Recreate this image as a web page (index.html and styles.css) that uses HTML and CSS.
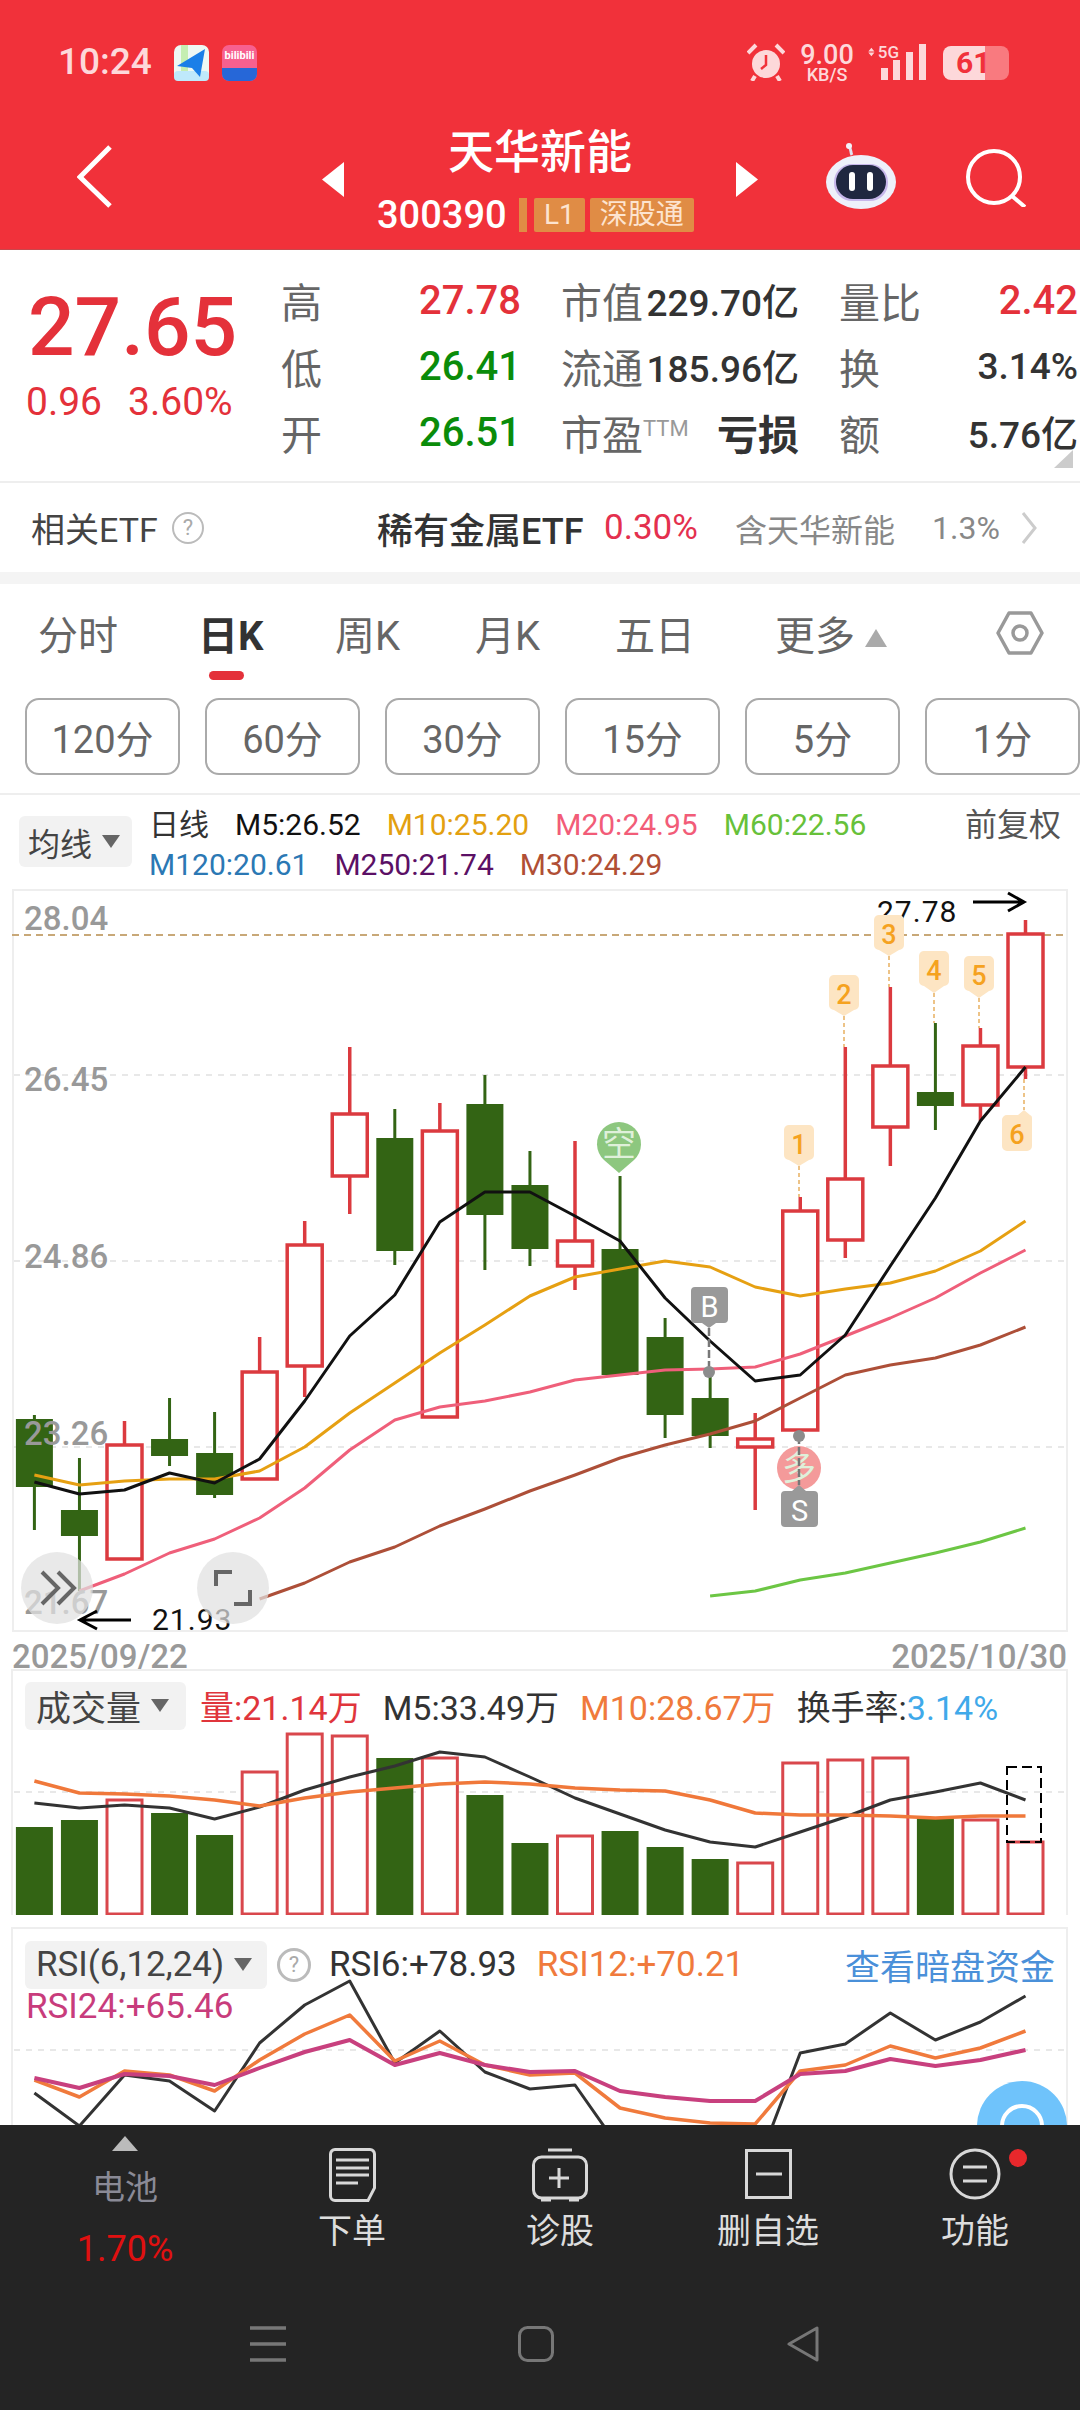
FILE: index.html
```html
<!DOCTYPE html>
<html lang="zh">

<head>
    <meta charset="utf-8">
    <meta name="viewport" content="width=device-width, initial-scale=1.0">
    <title>天华新能 300390</title>
    <link rel="stylesheet" href="styles.css">
</head>

<body>
    <header class="top">
        <div class="status">
            <span class="status-time">10:24</span>
            <svg class="app-icon" viewBox="0 0 35 36">
                <rect width="35" height="36" rx="7" fill="#eef8f4" />
                <rect x="7" width="7" height="36" fill="#c5eeb2" />
                <rect y="26" width="35" height="10" rx="4" fill="#bfe9fb" />
                <path d="M3 21L31 4L26 32L18 23Z" fill="#1a7fe8" />
            </svg>
            <div class="app-bili">
                <span>bilibili</span>
                <i></i>
            </div>
            <div class="status-right">
                <svg class="status-alarm" viewBox="0 0 38 38">
                    <circle cx="19" cy="21" r="14" fill="#fdd8da" />
                    <path d="M19 12V22L14 26" fill="none" stroke="#f1313a" stroke-width="2.5" />
                    <path d="M1 10L9 2M37 10L29 2M8 33L5 38M30 33L33 38" stroke="#fdd8da" stroke-width="4" />
                </svg>
                <div class="status-speed">
                    <b>9.00</b>
                    <span>KB/S</span>
                </div>
                <div class="status-net">
                    <svg width="11" height="14" viewBox="0 0 11 14">
                        <path d="M5.5 0L10.5 6H0.5ZM5.5 14L0.5 8H10.5Z" fill="#fdd8da" />
                    </svg>
                    <span>5G</span>
                </div>
                <svg class="status-signal" width="45" height="36" viewBox="0 0 45 36">
                    <rect y="24" width="7" height="12" fill="#fdd8da" />
                    <rect x="12" y="16" width="7" height="20" fill="#fdd8da" />
                    <rect x="25" y="8" width="7" height="28" fill="#fdd8da" />
                    <rect x="38" width="7" height="36" fill="#fdd8da" />
                </svg>
                <div class="status-battery"><span>61</span></div>
            </div>
        </div>

        <div class="nav">
            <svg class="nav-back" width="35" height="63" viewBox="0 0 35 63">
                <path d="M33 2L3 32L33 61" fill="none" stroke="#fff" stroke-width="5" />
            </svg>
            <svg class="nav-arrow prev" width="22" height="35" viewBox="0 0 22 35">
                <path d="M22 0V35L0 17.5Z" fill="#fff" />
            </svg>
            <div class="nav-center">
                <h1>天华新能</h1>
                <div class="nav-code">
                    <span class="code">300390</span>
                    <i class="tag-bar"></i>
                    <span class="tag">L1</span>
                    <span class="tag">深股通</span>
                </div>
            </div>
            <svg class="nav-arrow" width="22" height="35" viewBox="0 0 22 35">
                <path d="M0 0V35L22 17.5Z" fill="#fff" />
            </svg>
            <svg class="nav-robot" width="72" height="66" viewBox="0 0 72 66">
                <path d="M27 12C25 9 27 7 24 4" fill="none" stroke="#dfe3f3" stroke-width="3" />
                <circle cx="24" cy="3" r="3" fill="#f2f3fb" />
                <ellipse cx="36" cy="39" rx="35" ry="27" fill="#eef0fa" />
                <rect x="9" y="21" width="54" height="37" rx="18" fill="#c6b6ea" />
                <rect x="11" y="22" width="50" height="34" rx="17" fill="#1f2740" />
                <rect x="24" y="29" width="6" height="19" rx="3" fill="#fff" />
                <rect x="42" y="29" width="6" height="19" rx="3" fill="#fff" />
            </svg>
            <svg class="nav-search" width="60" height="58" viewBox="0 0 60 58">
                <circle cx="28" cy="28" r="26" fill="none" stroke="#fff" stroke-width="4" />
                <path d="M46 47L59 58" stroke="#fff" stroke-width="4" />
            </svg>
        </div>
    </header>

    <section class="quote">
        <div class="price">
            <div class="price-now">27.65</div>
            <div class="price-change"><span>0.96</span><span>3.60%</span></div>
        </div>
        <div class="stats">
            <div class="stat"><span class="stat-label">高</span><span class="red">27.78</span></div>
            <div class="stat"><span class="stat-label">市值</span><span class="dark">229.70亿</span></div>
            <div class="stat"><span class="stat-label">量比</span><span class="red">2.42</span></div>
            <div class="stat"><span class="stat-label">低</span><span class="green">26.41</span></div>
            <div class="stat"><span class="stat-label">流通</span><span class="dark">185.96亿</span></div>
            <div class="stat"><span class="stat-label">换</span><span class="dark">3.14%</span></div>
            <div class="stat"><span class="stat-label">开</span><span class="green">26.51</span></div>
            <div class="stat"><span class="stat-label">市盈<sup>TTM</sup></span><span class="dark loss">亏损</span></div>
            <div class="stat"><span class="stat-label">额</span><span class="dark">5.76亿</span></div>
        </div>
        <i class="quote-corner"></i>
    </section>

    <section class="etf">
        <span class="etf-title">相关ETF</span>
        <i class="help etf-help">?</i>
        <span class="etf-name">稀有金属ETF</span>
        <span class="etf-rate">0.30%</span>
        <span class="etf-hold">含天华新能</span>
        <span class="etf-hold etf-pct">1.3%</span>
        <svg class="etf-more" width="16" height="32" viewBox="0 0 16 32">
            <path d="M2 1L14 16L2 31" fill="none" stroke="#ccc" stroke-width="3" />
        </svg>
    </section>

    <div class="band"></div>

    <nav class="tabs">
        <button class="tab">分时</button>
        <button class="tab active">日K</button>
        <button class="tab">周K</button>
        <button class="tab">月K</button>
        <button class="tab">五日</button>
        <button class="tab">更多<i class="tab-up"></i></button>
        <svg class="tab-hex" width="48" height="46" viewBox="0 0 48 46">
            <path d="M2 23L13 3H35L46 23L35 43H13Z" fill="none" stroke="#999" stroke-width="3.5" stroke-linejoin="round" />
            <circle cx="24" cy="23" r="7" fill="none" stroke="#999" stroke-width="3.5" />
        </svg>
    </nav>

    <div class="periods">
        <button>120分</button>
        <button>60分</button>
        <button>30分</button>
        <button>15分</button>
        <button>5分</button>
        <button>1分</button>
    </div>

    <section class="legend">
        <div class="chip chip-ma">均线<i class="chip-down"></i></div>
        <div class="legend-text">
            <div class="legend-row">
                <span class="c-text">日线</span>
                <span class="c-black">M5:26.52</span>
                <span class="c-ma10">M10:25.20</span>
                <span class="c-ma20">M20:24.95</span>
                <span class="c-ma60">M60:22.56</span>
                <span class="legend-adjust">前复权</span>
            </div>
            <div class="legend-row">
                <span class="c-ma120">M120:20.61</span>
                <span class="c-ma250">M250:21.74</span>
                <span class="c-ma30">M30:24.29</span>
            </div>
        </div>
    </section>

    <!-- viewBox origins follow the page, so chart y values read as screen rows -->
    <svg class="kline" width="1080" height="743" viewBox="0 891 1080 743">
        <rect x="13" y="892" width="1054" height="741" fill="#fff" stroke="#eee" stroke-width="2" />
        <line class="grid-top" x1="12" y1="937" x2="1067" y2="937" />
        <line class="grid" x1="14" y1="1077" x2="1066" y2="1077" />
        <line class="grid" x1="14" y1="1263" x2="1066" y2="1263" />
        <line class="grid" x1="14" y1="1449" x2="1066" y2="1449" />

        <g id="kline-candles"></g>
        <g id="kline-lines"></g>

        <text class="axis" x="24" y="932">28.04</text>
        <text class="axis" x="24" y="1093">26.45</text>
        <text class="axis" x="24" y="1270">24.86</text>
        <text class="axis" x="24" y="1447">23.26</text>
        <text class="axis" x="24" y="1616">21.67</text>

        <text class="extreme" x="877" y="924">27.78</text>
        <path class="arrow" d="M973 904H1024M1008 895L1024 904L1008 913" />
        <text class="extreme" x="152" y="1632">21.93</text>
        <path class="arrow" d="M131 1622H80M97 1613L80 1622L97 1631" />

        <!-- numbered signals -->
        <g class="signal">
            <path class="signal-tie" d="M799 1168V1199M844 1018V1049M889 958V989M934 995V1025M979 1000V1030M1024 1081V1112" />
            <path d="M790 1127H809A5 5 0 0 1 814 1132V1157A5 5 0 0 1 809 1162L799 1168L789 1162A5 5 0 0 1 784 1157V1132A5 5 0 0 1 790 1127Z" />
            <text x="799" y="1156">1</text>
            <path d="M835 977H854A5 5 0 0 1 859 982V1007A5 5 0 0 1 854 1012L844 1018L834 1012A5 5 0 0 1 829 1007V982A5 5 0 0 1 835 977Z" />
            <text x="844" y="1006">2</text>
            <path d="M880 917H899A5 5 0 0 1 904 922V947A5 5 0 0 1 899 952L889 958L879 952A5 5 0 0 1 874 947V922A5 5 0 0 1 880 917Z" />
            <text x="889" y="946">3</text>
            <path d="M925 953H944A5 5 0 0 1 949 958V983A5 5 0 0 1 944 988L934 995L924 988A5 5 0 0 1 919 983V958A5 5 0 0 1 925 953Z" />
            <text x="934" y="982">4</text>
            <path d="M970 958H989A5 5 0 0 1 994 963V988A5 5 0 0 1 989 993L979 1000L969 993A5 5 0 0 1 964 988V963A5 5 0 0 1 970 958Z" />
            <text x="979" y="987">5</text>
            <path d="M1007 1117H1018L1024 1112L1030 1117A3 3 0 0 1 1032 1120V1148A5 5 0 0 1 1027 1153H1007A5 5 0 0 1 1002 1148V1122A5 5 0 0 1 1007 1117Z" />
            <text x="1017" y="1146">6</text>
        </g>

        <!-- empty / long pins -->
        <path class="pin-empty" d="M619 1175L604 1162A22 22 0 1 1 634 1162Z" />
        <text class="pin-text" x="619" y="1158">空</text>

        <path class="trade-tie" d="M709 1330V1373" />
        <circle class="trade-dot" cx="709" cy="1374" r="6" />
        <path class="trade-box" d="M695 1289H724A4 4 0 0 1 728 1293V1321A4 4 0 0 1 724 1325H716L709 1330L702 1325H695A4 4 0 0 1 691 1321V1293A4 4 0 0 1 695 1289Z" />
        <text class="trade-text" x="709.5" y="1319">B</text>

        <circle class="pin-long" cx="799" cy="1470" r="22" />
        <text class="pin-text" x="799" y="1482">多</text>
        <path class="trade-tie" d="M799 1438V1487" />
        <circle class="trade-dot" cx="799" cy="1438" r="6" />
        <path class="trade-box" d="M785 1493H792L799 1487L806 1493H814A4 4 0 0 1 818 1497V1525A4 4 0 0 1 814 1529H785A4 4 0 0 1 781 1525V1497A4 4 0 0 1 785 1493Z" />
        <text class="trade-text" x="799.5" y="1523">S</text>

        <!-- floating chart buttons -->
        <circle class="float-btn" cx="57" cy="1590" r="36" />
        <path class="float-icon" d="M42 1574L58 1590L42 1606M58 1574L74 1590L58 1606" />
        <circle class="float-btn" cx="233" cy="1590" r="36" />
        <path class="float-icon" d="M216 1588V1574H232M250 1592V1606H234" />
    </svg>

    <div class="dates"><span>2025/09/22</span><span>2025/10/30</span></div>

    <section class="pane pane-volume">
        <svg width="1080" height="246" viewBox="0 1671 1080 246">
            <path class="pane-frame" d="M12 1917V1672H1067V1917" />
            <line class="grid" x1="14" y1="1794" x2="1066" y2="1794" />
            <g id="volume-bars"></g>
            <rect class="volume-mark" x="1007" y="1769" width="34" height="75" />
            <g id="volume-lines"></g>
        </svg>
        <div class="pane-legend">
            <div class="pane-row volume-row">
                <div class="chip chip-vol">成交量<i class="chip-down"></i></div>
                <span class="c-red">量:21.14万</span>
                <span class="c-dark">M5:33.49万</span>
                <span class="c-orange">M10:28.67万</span>
                <span class="c-dark">换手率:<span class="c-blue">3.14%</span></span>
            </div>
        </div>
    </section>

    <section class="pane pane-rsi">
        <svg width="1080" height="198" viewBox="0 1929 1080 198">
            <path class="pane-frame" d="M12 2127V1930H1067V2127" />
            <line class="grid" x1="14" y1="2052" x2="1066" y2="2052" />
            <g id="rsi-lines"></g>
            <circle class="fab" cx="1022" cy="2128" r="45" />
            <circle class="fab-ring" cx="1022" cy="2128" r="20" />
        </svg>
        <div class="pane-legend">
            <div class="pane-row rsi-row">
                <div class="chip chip-rsi">RSI(6,12,24)<i class="chip-down"></i></div>
                <i class="help rsi-help">?</i>
                <span class="c-dark">RSI6:+78.93</span>
                <span class="c-orange">RSI12:+70.21</span>
                <span class="rsi-link">查看暗盘资金</span>
            </div>
            <div class="rsi-second">RSI24:+65.46</div>
        </div>
    </section>

    <footer class="bottom">
        <div class="actions">
            <div class="action action-battery">
                <i class="battery-up"></i>
                <span class="battery-name">电池</span>
                <span class="battery-rate">1.70%</span>
            </div>
            <div class="action">
                <svg width="47" height="54" viewBox="0 0 47 54">
                    <path class="action-line" d="M6 1.5H41A4.5 4.5 0 0 1 45.5 6V40L39 52.5H6A4.5 4.5 0 0 1 1.5 48V6A4.5 4.5 0 0 1 6 1.5Z" />
                    <path class="action-line" d="M7 12H40M7 20H40M7 27H40M7 35H29" />
                </svg>
                <span>下单</span>
            </div>
            <div class="action">
                <svg width="56" height="54" viewBox="0 0 56 54">
                    <path class="action-line" d="M16 2H40" />
                    <rect class="action-line" x="1.5" y="9" width="53" height="41" rx="8" />
                    <path class="action-line" d="M27 20V40M17 30H37" />
                    <path class="action-line" d="M9 52H19M37 52H47" />
                </svg>
                <span>诊股</span>
            </div>
            <div class="action">
                <svg width="47" height="54" viewBox="0 0 47 54">
                    <rect class="action-line" x="1.5" y="2.5" width="44" height="47" />
                    <path class="action-line" d="M11 26H37" />
                </svg>
                <span>删自选</span>
            </div>
            <div class="action">
                <svg width="52" height="54" viewBox="0 0 52 54">
                    <circle class="action-line" cx="26" cy="26" r="24" />
                    <path class="action-line" d="M14 19H38M14 33H38" />
                </svg>
                <span>功能</span>
                <i class="action-dot"></i>
            </div>
        </div>
        <div class="gestures">
            <svg width="36" height="36" viewBox="0 0 36 36">
                <path d="M0 2H36M0 18H36M0 34H36" stroke="#777" stroke-width="3.5" />
            </svg>
            <svg width="36" height="36" viewBox="0 0 36 36">
                <rect x="1.5" y="1.5" width="33" height="33" rx="8" fill="none" stroke="#777" stroke-width="3" />
            </svg>
            <svg width="34" height="36" viewBox="0 0 34 36">
                <path d="M31 2V34L3 18Z" fill="none" stroke="#777" stroke-width="3" stroke-linejoin="round" />
            </svg>
        </div>
    </footer>

    <script src="chart.js"></script>
</body>

</html>
```

FILE: styles.css
```css
* {
    box-sizing: border-box;
}

body,
h1 {
    margin: 0;
    padding: 0;
}

body {
    width: 1080px;
    height: 2412px;
    overflow: hidden;
    background-color: #fff;
    font-family: Roboto, "Noto Sans CJK SC", sans-serif;
    color: #333;
}

i {
    font-style: normal;
}

button {
    font-family: inherit;
    background: none;
    border: 0;
    padding: 0;
}

/* top red area */
.top {
    height: 250px;
    background-color: #f1313a;
    border-bottom: 1px solid #c9474c;
}

.status {
    display: flex;
    align-items: flex-start;
    height: 120px;
    padding: 43px 71px 0 58px;
    color: #fdd8da;
}

.status-time {
    width: 116px;
    font-size: 37px;
    line-height: 38px;
    font-weight: 500;
}

.app-icon {
    width: 35px;
    height: 36px;
    margin: 2px 13px 0 0;
}

.app-bili {
    width: 35px;
    height: 36px;
    margin-top: 2px;
    border-radius: 7px;
    background-color: #f7608f;
    overflow: hidden;
    color: #fff;
    font-size: 11px;
    line-height: 22px;
    text-align: center;
}

.app-bili span {
    display: block;
    height: 23px;
    font-weight: 700;
}

.app-bili i {
    display: block;
    height: 13px;
    background-color: #2667d8;
}

.status-right {
    display: flex;
    align-items: flex-start;
    margin-left: auto;
}

.status-alarm {
    width: 38px;
    height: 38px;
    margin-right: 12px;
}

.status-speed {
    width: 60px;
    text-align: center;
    font-size: 18px;
    line-height: 18px;
}

.status-speed b {
    display: block;
    font-size: 27px;
    line-height: 24px;
    font-weight: 500;
}

.status-speed span {
    display: block;
    font-weight: 500;
    margin-top: -1px;
}

.status-net {
    display: flex;
    align-items: center;
    width: 31px;
    margin: 2px 0 0 11px;
    gap: 3px;
    font-size: 17px;
    line-height: 14px;
    font-weight: 500;
}

.status-signal {
    margin: 1px 0 0 -18px;
}

.status-battery {
    width: 66px;
    height: 34px;
    margin: 3px 0 0 17px;
    border-radius: 8px;
    background: linear-gradient(90deg, #fdd8da 64%, #f97a7f 64%);
    color: #f1313a;
    font-size: 30px;
    line-height: 34px;
    font-weight: 700;
    padding-left: 13px;
}

.nav {
    display: flex;
    align-items: flex-start;
    height: 129px;
}

.nav-back {
    margin: 25px 0 0 77px;
}

.nav-arrow {
    margin-top: 42px;
}

.nav-arrow.prev {
    margin-left: 210px;
}

.nav-center {
    width: 392px;
    color: #fff;
}

.nav-center h1 {
    margin-top: 6px;
    font-size: 46px;
    line-height: 52px;
    font-weight: 500;
    text-align: center;
}

.nav-code {
    display: flex;
    align-items: center;
    height: 34px;
    margin-top: 20px;
    padding-left: 33px;
}

.code {
    width: 142px;
    font-size: 38px;
    font-weight: 500;
}

.tag-bar {
    width: 8px;
    height: 34px;
    background-color: #e08c45;
    margin-right: 7px;
}

.tag {
    height: 34px;
    margin-right: 5px;
    padding: 0 10px;
    background-color: #e08c45;
    border-radius: 2px;
    color: #fde4d0;
    font-size: 28px;
    line-height: 34px;
}

.nav-robot {
    margin: 23px 0 0 67px;
}

.nav-search {
    margin: 29px 0 0 69px;
}

/* quote block */
.quote {
    position: relative;
    display: flex;
    height: 233px;
    border-bottom: 2px solid #eee;
}

.price {
    width: 281px;
    padding-left: 26px;
    color: #e4313a;
}

.price-now {
    margin: 39px 0 0 2px;
    font-size: 82px;
    line-height: 76px;
    font-weight: 500;
}

.price-change {
    display: flex;
    gap: 26px;
    margin-top: 14px;
    font-size: 39px;
    line-height: 46px;
}

.stats {
    display: grid;
    grid-template-columns: 240px 238px 239px;
    grid-auto-rows: 66px;
    column-gap: 40px;
    padding-top: 17px;
}

.stat {
    display: flex;
    justify-content: space-between;
    align-items: center;
    font-size: 37px;
    font-weight: 500;
}

.stat-label {
    font-size: 41px;
    font-weight: 400;
    color: #666;
}

.stat-label sup {
    font-size: 22px;
    color: #999;
    vertical-align: 14px;
    line-height: 0;
}

.red {
    color: #e4313a;
}

.green {
    color: #0a8c0a;
}

.dark {
    color: #333;
}

.loss {
    font-size: 41px;
    font-weight: 700;
}

.stats .red,
.stats .green {
    font-size: 40px;
}

.quote-corner {
    position: absolute;
    right: 7px;
    top: 200px;
    width: 0;
    height: 0;
    border-left: 19px solid transparent;
    border-bottom: 18px solid #ccc;
}

/* related fund row */
.etf {
    display: flex;
    align-items: center;
    height: 89px;
    padding: 0 0 0 31px;
}

.etf-title {
    width: 141px;
    font-size: 34px;
    color: #444;
}

.help {
    display: block;
    border: 2px solid #bbb;
    border-radius: 50%;
    color: #aaa;
    text-align: center;
}

.etf-help {
    width: 32px;
    height: 32px;
    font-size: 22px;
    line-height: 28px;
}

.etf-name {
    margin-left: 173px;
    width: 227px;
    font-size: 36px;
    font-weight: 500;
    color: #333;
}

.etf-rate {
    width: 131px;
    font-size: 35px;
    color: #e4304e;
}

.etf-hold {
    font-size: 32px;
    color: #888;
}

.etf-pct {
    margin-left: 37px;
}

.etf-more {
    margin-left: 21px;
}

.band {
    height: 12px;
    background-color: #f4f4f4;
}

/* period tabs */
.tabs {
    position: relative;
    display: grid;
    grid-template-columns: 160px 137px 140px 140px 160px 221px 48px;
    height: 114px;
    padding-left: 38px;
}

.tab {
    position: relative;
    height: 98px;
    text-align: left;
    font-size: 40px;
    color: #666;
}

.tab.active {
    font-weight: 700;
    color: #333;
}

.tab.active::after {
    content: "";
    position: absolute;
    left: 11px;
    top: 87px;
    width: 35px;
    height: 9px;
    border-radius: 5px;
    background-color: #e4313a;
}

.tab-up {
    display: inline-block;
    margin: 0 0 3px 10px;
    border-left: 11px solid transparent;
    border-right: 11px solid transparent;
    border-bottom: 18px solid #aaa;
}

.tab-hex {
    margin-top: 26px;
}

.periods {
    display: flex;
    gap: 25px;
    height: 97px;
    padding-left: 25px;
    border-bottom: 2px solid #eee;
}

.periods button {
    flex: 0 0 155px;
    height: 77px;
    border: 2px solid #aaa;
    border-radius: 14px;
    font-size: 38px;
    color: #666;
}

/* indicator legend */
.legend {
    display: flex;
    height: 94px;
}

.chip {
    display: flex;
    align-items: center;
    height: 48px;
    background-color: #f2f2f2;
    border-radius: 6px;
    color: #444;
    white-space: nowrap;
}

.chip-ma {
    width: 113px;
    height: 51px;
    margin: 21px 0 0 19px;
    padding-left: 9px;
    font-size: 32px;
}

.chip-down {
    width: 0;
    height: 0;
    margin-left: 10px;
    border-left: 9px solid transparent;
    border-right: 9px solid transparent;
    border-top: 13px solid #666;
}

.legend-text {
    flex: 1;
    margin-left: 17px;
    padding: 10px 19px 0 0;
}

.legend-row {
    display: flex;
    gap: 26px;
    font-size: 30px;
    line-height: 40px;
    white-space: nowrap;
}

.legend-adjust {
    margin-left: auto;
    font-size: 32px;
    color: #555;
}

.c-text {
    color: #333;
}

.c-black {
    color: #111;
}

.c-ma10 {
    color: #e3a010;
}

.c-ma20 {
    color: #f25c78;
}

.c-ma60 {
    color: #67c13a;
}

.c-ma120 {
    color: #2b78b4;
}

.c-ma250 {
    color: #5b1065;
}

.c-ma30 {
    color: #b04f35;
}

.c-red {
    color: #e0353c;
}

.c-dark {
    color: #333;
}

.c-orange {
    color: #f07a3c;
}

.c-blue {
    color: #3fa9ea;
}

/* k line chart */
.kline {
    display: block;
}

.grid {
    stroke: #e8e8e8;
    stroke-width: 2;
    stroke-dasharray: 6 6;
}

.grid-top {
    stroke: #c8a878;
    stroke-width: 2;
    stroke-dasharray: 7 5;
}

.axis {
    font-size: 33px;
    font-weight: 500;
    fill: #999;
}

.extreme {
    font-size: 30px;
    letter-spacing: 1px;
    fill: #111;
}

.arrow {
    fill: none;
    stroke: #000;
    stroke-width: 3;
}

.signal path {
    fill: #fde5c3;
}

.signal .signal-tie {
    fill: none;
    stroke: #e8b060;
    stroke-width: 1.5;
    stroke-dasharray: 4 3;
}

.signal text {
    font-size: 27px;
    font-weight: 500;
    fill: #f5a21f;
    text-anchor: middle;
}

.pin-empty {
    fill: #8dc77f;
}

.pin-long {
    fill: #f49a9a;
}

.pin-text {
    font-size: 34px;
    fill: #dff0da;
    text-anchor: middle;
}

.trade-tie {
    stroke: #777;
    stroke-width: 2.5;
    stroke-dasharray: 8 3;
}

.trade-dot {
    fill: #8c8c8c;
}

.trade-box {
    fill: #999;
}

.trade-text {
    font-size: 29px;
    fill: #fff;
    text-anchor: middle;
}

.float-btn {
    fill: rgba(225, 225, 225, 0.72);
}

.float-icon {
    fill: none;
    stroke: #666;
    stroke-width: 4;
}

.dates {
    display: flex;
    justify-content: space-between;
    height: 37px;
    padding: 0 13px 0 12px;
    font-size: 33px;
    font-weight: 500;
    line-height: 50px;
    color: #999;
    overflow: hidden;
}

/* volume and rsi panes */
.pane {
    position: relative;
}

.pane svg {
    display: block;
}

.pane-volume {
    height: 258px;
}

.pane-rsi {
    height: 198px;
    overflow: hidden;
}

.pane-frame {
    fill: none;
    stroke: #eee;
    stroke-width: 2;
}

.volume-mark {
    fill: none;
    stroke: #000;
    stroke-width: 2;
    stroke-dasharray: 10 5;
}

.pane-legend {
    position: absolute;
    left: 25px;
    right: 25px;
    top: 12px;
}

.pane-row {
    display: flex;
    align-items: center;
    white-space: nowrap;
}

.volume-row {
    gap: 21px;
    font-size: 34px;
}

.chip-vol {
    width: 161px;
    padding-left: 11px;
    margin-right: -7px;
    font-size: 35px;
}

.rsi-row {
    font-size: 35px;
}

.chip-rsi {
    width: 242px;
    padding-left: 11px;
}

.rsi-help {
    width: 34px;
    height: 34px;
    margin: 0 18px 0 10px;
    border-width: 3px;
    font-size: 22px;
    line-height: 28px;
}

.rsi-row .c-orange {
    margin-left: 20px;
}

.rsi-link {
    margin-left: auto;
    color: #4a90d9;
}

.rsi-second {
    margin-left: 1px;
    font-size: 35px;
    line-height: 34px;
    color: #c83c7c;
}

.fab {
    fill: #6fc3fb;
}

.fab-ring {
    fill: none;
    stroke: #fff;
    stroke-width: 4;
}

/* dark toolbar */
.bottom {
    height: 285px;
    background-color: #242424;
}

.actions {
    display: grid;
    grid-template-columns: 250px 204px 212px 204px 210px;
    height: 201px;
}

.action {
    position: relative;
    display: flex;
    flex-direction: column;
    align-items: center;
    padding-top: 23px;
    font-size: 34px;
    color: #ddd;
}

.action span {
    margin-top: 12px;
    line-height: 34px;
}

.action-line {
    fill: none;
    stroke: #d8d8d8;
    stroke-width: 3;
}

.action-dot {
    position: absolute;
    left: 139px;
    top: 24px;
    width: 18px;
    height: 18px;
    border-radius: 50%;
    background-color: #e8282c;
}

.action-battery {
    padding-top: 11px;
}

.battery-up {
    border-left: 13px solid transparent;
    border-right: 13px solid transparent;
    border-bottom: 15px solid #bbb;
}

.action .battery-name {
    margin-top: 20px;
    color: #8a8a96;
    font-size: 33px;
}

.action .battery-rate {
    margin-top: 27px;
    color: #e01010;
    font-size: 36px;
}

.gestures {
    display: flex;
    gap: 232px;
    padding-left: 250px;
}
```

FILE: chart.js
```js
const SVG_NS = "http://www.w3.org/2000/svg";
const RED = "#db3a3f";
const GREEN = "#336414";

function slotX(i) {
    return 34.4 + 45.05 * i;
}

function add(parent, tag, attrs) {
    const el = document.createElementNS(SVG_NS, tag);
    for (const key in attrs) {
        el.setAttribute(key, attrs[key]);
    }
    parent.appendChild(el);
    return el;
}

// first = index of the slot the series starts on
function drawLine(parent, ys, colour, width, first = 0) {
    const points = ys.map((y, i) => slotX(i + first).toFixed(1) + "," + y).join(" ");
    add(parent, "polyline", {
        points: points,
        fill: "none",
        stroke: colour,
        "stroke-width": width,
        "stroke-linejoin": "round",
    });
}

// wick top, body top, body bottom, wick bottom, rising
const candles = [
    [1417, 1421, 1489, 1532, 0],
    [1460, 1512, 1538, 1593, 0],
    [1423, 1447, 1561, 1561, 1],
    [1400, 1441, 1458, 1468, 0],
    [1414, 1455, 1497, 1500, 0],
    [1339, 1374, 1481, 1481, 1],
    [1223, 1247, 1368, 1399, 1],
    [1049, 1116, 1178, 1216, 1],
    [1111, 1140, 1253, 1267, 0],
    [1105, 1133, 1419, 1419, 1],
    [1077, 1106, 1217, 1272, 0],
    [1153, 1187, 1251, 1268, 0],
    [1143, 1243, 1268, 1292, 1],
    [1178, 1251, 1377, 1378, 0],
    [1320, 1339, 1417, 1440, 0],
    [1373, 1400, 1438, 1450, 0],
    [1415, 1441, 1449, 1512, 1],
    [1199, 1213, 1432, 1432, 1],
    [1049, 1181, 1242, 1260, 1],
    [989, 1068, 1129, 1168, 1],
    [1025, 1094, 1108, 1132, 0],
    [1030, 1048, 1107, 1123, 1],
    [922, 936, 1069, 1081, 1],
];

const candleGroup = document.querySelector("#kline-candles");
candles.forEach((c, i) => {
    const x = slotX(i);
    const colour = c[4] ? RED : GREEN;
    add(candleGroup, "line", {
        x1: x, x2: x, y1: c[0], y2: c[3],
        stroke: colour,
        "stroke-width": c[4] ? 3.5 : 3,
    });
    if (c[4]) {
        add(candleGroup, "rect", {
            x: x - 17.5, y: c[1], width: 35, height: c[2] - c[1],
            fill: "#fff", stroke: colour, "stroke-width": 3.5,
        });
    } else {
        add(candleGroup, "rect", {
            x: x - 18.5, y: c[1], width: 37, height: c[2] - c[1],
            fill: colour,
        });
    }
});

const klineLines = document.querySelector("#kline-lines");
drawLine(klineLines, [1598, 1593, 1582, 1575, 1565, 1555, 1544, 1530], "#6cc644", 3, 15);
drawLine(klineLines, [1601, 1585, 1564, 1549, 1528, 1511, 1493, 1477, 1460, 1447, 1436, 1423, 1400, 1377, 1367, 1360, 1347, 1329], "#ad4f38", 3, 5);
drawLine(klineLines, [1593, 1576, 1555, 1541, 1520, 1490, 1452, 1422, 1409, 1403, 1394, 1382, 1377, 1372, 1371, 1369, 1356, 1338, 1320, 1300, 1275, 1252], "#ef5f7a", 3, 1);
drawLine(klineLines, [1477, 1487, 1483, 1481, 1481, 1473, 1449, 1415, 1385, 1355, 1327, 1298, 1279, 1271, 1263, 1269, 1289, 1298, 1291, 1285, 1273, 1253, 1223], "#e6a012", 3);
drawLine(klineLines, [1484, 1496, 1492, 1475, 1485, 1461, 1403, 1338, 1297, 1224, 1194, 1194, 1218, 1243, 1300, 1343, 1383, 1377, 1337, 1268, 1200, 1123, 1069], "#111", 3);

// volume tops; bars share one base line
const volumes = [
    [1829, 0], [1822, 0], [1802, 1], [1815, 0], [1837, 0], [1774, 1], [1736, 1], [1738, 1],
    [1760, 0], [1760, 1], [1797, 0], [1845, 0], [1838, 1], [1833, 0], [1849, 0], [1861, 0],
    [1865, 1], [1765, 1], [1762, 1], [1760, 1], [1820, 0], [1822, 1], [1844, 1],
];

const volumeBars = document.querySelector("#volume-bars");
volumes.forEach((v, i) => {
    const x = slotX(i);
    if (v[1]) {
        add(volumeBars, "rect", {
            x: x - 17.5, y: v[0], width: 35, height: 1916 - v[0],
            fill: "#fff", stroke: "#d9474c", "stroke-width": 3,
        });
    } else {
        add(volumeBars, "rect", {
            x: x - 18.5, y: v[0], width: 37, height: 1917 - v[0],
            fill: GREEN,
        });
    }
});

const volumeLines = document.querySelector("#volume-lines");
drawLine(volumeLines, [1805, 1810, 1807, 1810, 1821, 1809, 1792, 1779, 1768, 1754, 1759, 1779, 1800, 1816, 1832, 1844, 1849, 1834, 1819, 1802, 1794, 1785, 1802], "#333", 3);
drawLine(volumeLines, [1783, 1795, 1796, 1798, 1802, 1808, 1800, 1794, 1790, 1786, 1784, 1786, 1790, 1792, 1793, 1802, 1815, 1817, 1817, 1818, 1820, 1818, 1818], "#f0783a", 3.5);

const rsiLines = document.querySelector("#rsi-lines");
drawLine(rsiLines, [2095, 2128, 2077, 2083, 2113, 2045, 2007, 1983, 2065, 2033, 2074, 2091, 2087, 2151, 2165, 2172, 2173, 2055, 2046, 2015, 2042, 2024, 1998], "#333", 3);
drawLine(rsiLines, [2082, 2099, 2073, 2077, 2093, 2062, 2036, 2017, 2063, 2043, 2067, 2077, 2075, 2110, 2120, 2125, 2126, 2073, 2067, 2048, 2060, 2050, 2033], "#f07a3c", 3.5);
drawLine(rsiLines, [2080, 2090, 2076, 2078, 2087, 2070, 2054, 2042, 2067, 2055, 2067, 2074, 2073, 2093, 2099, 2103, 2103, 2076, 2073, 2061, 2068, 2062, 2052], "#c8407e", 4);
```
